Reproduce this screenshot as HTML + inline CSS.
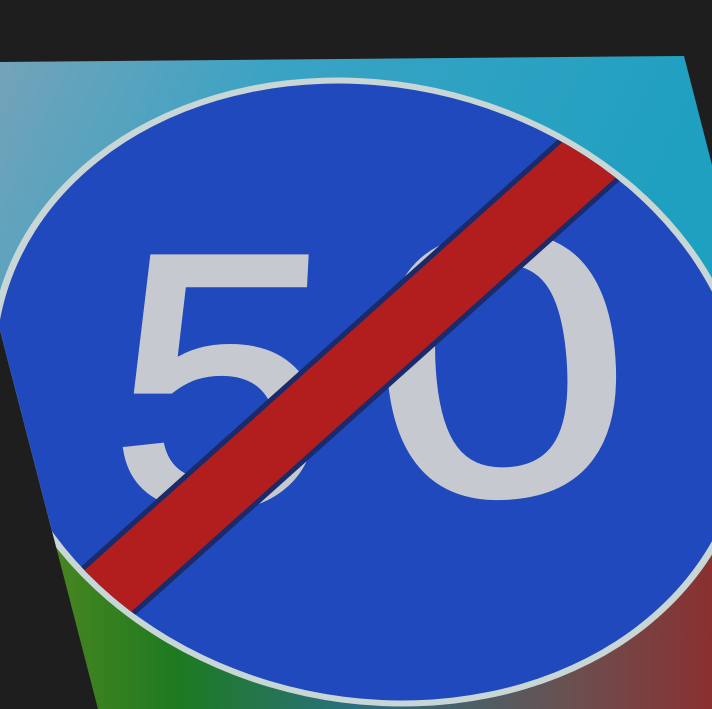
<!DOCTYPE html>
<html><head><style>html,body{margin:0;padding:0;background:#1e1e1e;width:712px;height:709px;overflow:hidden}svg{display:block}</style></head>
<body>
<svg width="712" height="709" viewBox="0 0 712 709" xmlns="http://www.w3.org/2000/svg">
<defs>
<linearGradient id="sky" x1="0" y1="0" x2="1" y2="0.3">
<stop offset="0" stop-color="#7aa3b8"/><stop offset="0.4" stop-color="#3aa3c4"/><stop offset="1" stop-color="#1ea0c0"/>
</linearGradient>
<linearGradient id="grass" x1="0" y1="0" x2="1" y2="0">
<stop offset="0" stop-color="#5a8a20"/><stop offset="0.25" stop-color="#1e7a20"/><stop offset="0.5" stop-color="#2a7080"/><stop offset="0.8" stop-color="#6a5050"/><stop offset="1" stop-color="#8a3030"/>
</linearGradient>
<clipPath id="pic"><polygon points="0,62 684,56 712,165 712,709 98,709 0,330"/></clipPath>
<clipPath id="inner"><ellipse cx="370" cy="392" rx="377" ry="305" transform="rotate(12 370 392)"/></clipPath>
</defs>
<g clip-path="url(#pic)">
<rect x="0" y="0" width="712" height="450" fill="url(#sky)"/>
<rect x="0" y="450" width="712" height="260" fill="url(#grass)"/>
<ellipse cx="370" cy="392" rx="384" ry="311" transform="rotate(12 370 392)" fill="#c9d6d6"/>
<ellipse cx="370" cy="392" rx="377" ry="305" transform="rotate(12 370 392)" fill="#1f49bd"/>
<g clip-path="url(#inner)">
<text x="0" y="0" font-family="Liberation Sans, sans-serif" font-size="360" fill="#c6c9cf" stroke="#c6c9cf" stroke-width="6" transform="translate(108,505) skewX(-3) scale(1.08,1)">5</text>
<text x="0" y="0" font-family="Liberation Sans, sans-serif" font-size="370" fill="#c6c9cf" stroke="#c6c9cf" stroke-width="6" transform="translate(382,502) rotate(-4) scale(1.25,1)">0</text>
<line x1="70" y1="625" x2="600" y2="150" stroke="#1a2a6a" stroke-width="72"/>
<line x1="70" y1="625" x2="600" y2="150" stroke="#b21e1e" stroke-width="62"/>
</g>
</g>
</svg>
</body></html>
